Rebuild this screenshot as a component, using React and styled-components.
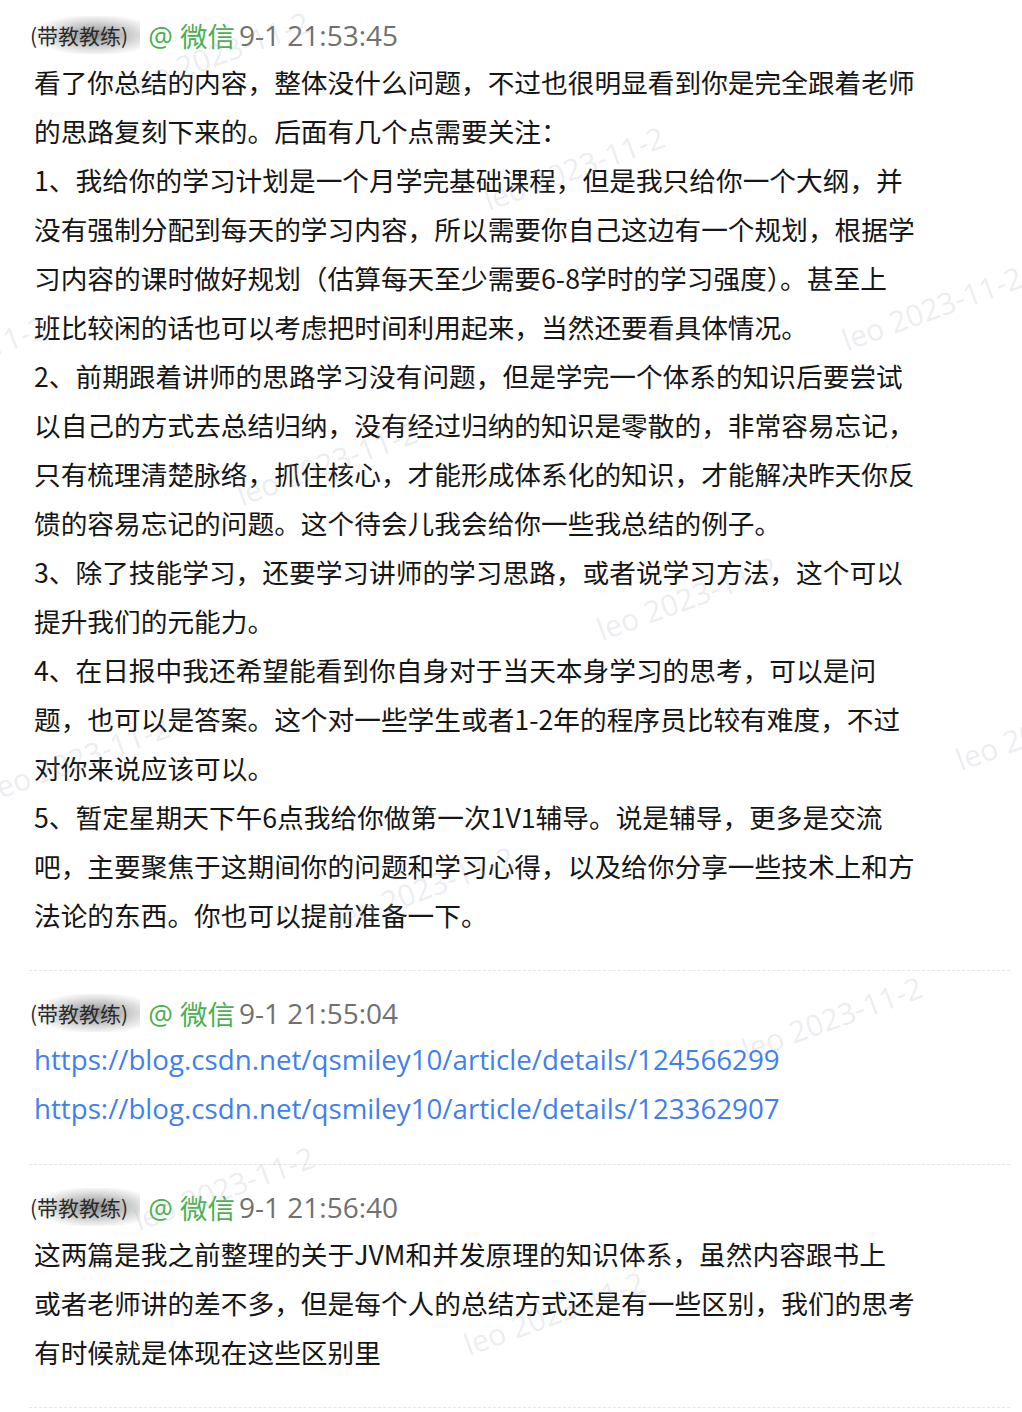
import React from "react";
import styled, { createGlobalStyle } from "styled-components";

const Global = createGlobalStyle`
  html, body { margin: 0; padding: 0; background: #ffffff; }
  body { font-family: "Noto Sans CJK SC", "Noto Sans", sans-serif; }
`;

const Page = styled.div`
  position: relative;
  width: 1022px;
  min-height: 1412px;
  overflow: hidden;
  background: #ffffff;
`;

const Feed = styled.div`
  display: flex;
  flex-direction: column;
  padding: 0 12px 0 29px;
`;

const Message = styled.section`
  display: flex;
  flex-direction: column;
  padding: ${(p) => (p.$first ? "13px" : "20px")} 0 31px 0;
  border-bottom: 1px dashed #e6e6e6;
`;

const Header = styled.div`
  display: flex;
  align-items: center;
  height: 44px;
  white-space: nowrap;
`;

const Name = styled.span`
  font-family: "Noto Sans CJK SC", sans-serif;
  font-size: 21px;
  color: #2a2a2a;
  padding: 4px 12px 4px 1px;
  background: radial-gradient(ellipse 58% 55% at 60% 50%, rgba(30, 30, 30, 0.5), rgba(40, 40, 40, 0.15) 70%, rgba(255, 255, 255, 0) 100%);
`;

const Source = styled.span`
  margin-left: 8px;
  font-family: "Open Sans", "Noto Sans CJK SC", sans-serif;
  font-size: 27.5px;
  color: #4caf50;
`;

const Time = styled.span`
  margin-left: 4px;
  font-family: "Open Sans", "Noto Sans CJK SC", sans-serif;
  font-size: 28px;
  color: #707070;
`;

const Body = styled.div`
  display: flex;
  flex-direction: column;
  padding-left: 5px;
`;

const Line = styled.div`
  height: 49px;
  line-height: 49px;
  font-size: 26.7px;
  color: #161616;
  white-space: nowrap;
  font-family: "Noto Sans CJK SC", sans-serif;
`;

const Link = styled.a`
  display: block;
  height: 49px;
  line-height: 49px;
  font-family: "Open Sans", "Noto Sans", sans-serif;
  font-size: 27.7px;
  color: #3f7ff0;
  text-decoration: none;
  white-space: nowrap;
`;

const Watermark = styled.span`
  position: absolute;
  left: ${(p) => p.$x}px;
  top: ${(p) => p.$y}px;
  font-family: "Open Sans", sans-serif;
  font-size: 30px;
  color: rgba(170, 180, 195, 0.24);
  transform: rotate(-20deg);
  transform-origin: left bottom;
  white-space: nowrap;
  pointer-events: none;
  line-height: 1;
`;

const msg1 = [
  "看了你总结的内容，整体没什么问题，不过也很明显看到你是完全跟着老师",
  "的思路复刻下来的。后面有几个点需要关注：",
  "1、我给你的学习计划是一个月学完基础课程，但是我只给你一个大纲，并",
  "没有强制分配到每天的学习内容，所以需要你自己这边有一个规划，根据学",
  "习内容的课时做好规划（估算每天至少需要6-8学时的学习强度）。甚至上",
  "班比较闲的话也可以考虑把时间利用起来，当然还要看具体情况。",
  "2、前期跟着讲师的思路学习没有问题，但是学完一个体系的知识后要尝试",
  "以自己的方式去总结归纳，没有经过归纳的知识是零散的，非常容易忘记，",
  "只有梳理清楚脉络，抓住核心，才能形成体系化的知识，才能解决昨天你反",
  "馈的容易忘记的问题。这个待会儿我会给你一些我总结的例子。",
  "3、除了技能学习，还要学习讲师的学习思路，或者说学习方法，这个可以",
  "提升我们的元能力。",
  "4、在日报中我还希望能看到你自身对于当天本身学习的思考，可以是问",
  "题，也可以是答案。这个对一些学生或者1-2年的程序员比较有难度，不过",
  "对你来说应该可以。",
  "5、暂定星期天下午6点我给你做第一次1V1辅导。说是辅导，更多是交流",
  "吧，主要聚焦于这期间你的问题和学习心得，以及给你分享一些技术上和方",
  "法论的东西。你也可以提前准备一下。",
];

const links = [
  "https://blog.csdn.net/qsmiley10/article/details/124566299",
  "https://blog.csdn.net/qsmiley10/article/details/123362907",
];

const msg3 = [
  "这两篇是我之前整理的关于JVM和并发原理的知识体系，虽然内容跟书上",
  "或者老师讲的差不多，但是每个人的总结方式还是有一些区别，我们的思考",
  "有时候就是体现在这些区别里",
];

const marks = [
  [135, 70],
  [490, 185],
  [-128, 375],
  [848, 325],
  [243, 480],
  [603, 615],
  [962, 745],
  [-5, 775],
  [340, 905],
  [748, 1035],
  [140, 1205],
  [470, 1330],
];

function MsgHeader({ time }) {
  return (
    <Header>
      <Name>(带教教练)</Name>
      <Source>@ 微信</Source>
      <Time>{time}</Time>
    </Header>
  );
}

export default function App() {
  return (
    <Page>
      <Global />
      <Feed>
        <Message $first>
          <MsgHeader time="9-1 21:53:45" />
          <Body>
            {msg1.map((t, i) => (
              <Line key={i}>{t}</Line>
            ))}
          </Body>
        </Message>
        <Message>
          <MsgHeader time="9-1 21:55:04" />
          <Body>
            {links.map((l) => (
              <Link key={l} href={l}>
                {l}
              </Link>
            ))}
          </Body>
        </Message>
        <Message>
          <MsgHeader time="9-1 21:56:40" />
          <Body>
            {msg3.map((t, i) => (
              <Line key={i}>{t}</Line>
            ))}
          </Body>
        </Message>
      </Feed>
      {marks.map(([x, y], i) => (
        <Watermark key={i} $x={x} $y={y}>
          leo 2023-11-2
        </Watermark>
      ))}
    </Page>
  );
}
